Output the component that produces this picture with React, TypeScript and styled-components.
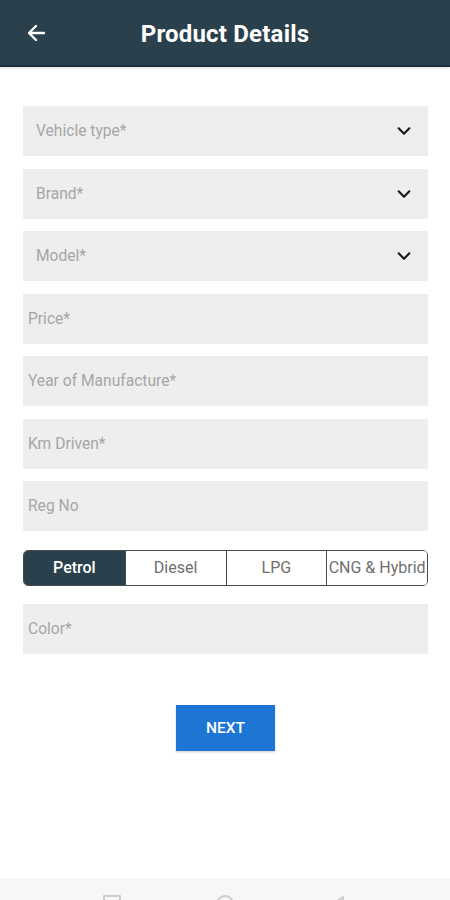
import React, { useState } from 'react';
import styled, { createGlobalStyle } from 'styled-components';

const GlobalStyle = createGlobalStyle`
  html, body {
    margin: 0;
    padding: 0;
    background: #ffffff;
    font-family: Roboto, "Liberation Sans", sans-serif;
  }
  * {
    box-sizing: border-box;
  }
`;

// Layout
const Screen = styled.div`
  width: 450px;
  height: 900px;
  display: flex;
  flex-direction: column;
  background: #ffffff;
  overflow: hidden;
`;

const Header = styled.header`
  height: 67px;
  flex-shrink: 0;
  background: #2b404d;
  border-bottom: 2px solid #1c2e3a;
  display: grid;
  grid-template-columns: 72px 1fr 72px;
  align-items: center;
  box-shadow: 0 1px 3px rgba(0, 0, 0, 0.15);
`;

const BackButton = styled.button`
  background: none;
  border: none;
  padding: 0 0 0 24px;
  height: 100%;
  display: flex;
  align-items: center;
  cursor: pointer;
`;

const Title = styled.h1`
  margin: 2px 0 0;
  text-align: center;
  color: #ffffff;
  font-size: 24px;
  font-weight: 700;
  letter-spacing: 0.2px;
`;

const Form = styled.form`
  flex: 1;
  display: flex;
  flex-direction: column;
  gap: 12.5px;
  padding: 39px 22px 0 23px;
`;

const Field = styled.div<{ $select?: boolean }>`
  height: 50px;
  flex-shrink: 0;
  background: #eeeeee;
  display: flex;
  align-items: center;
  justify-content: space-between;
  padding: ${({ $select }) => ($select ? '0 16px 0 13px' : '0 8px 0 5px')};
  font-size: 15.6px;
  color: #a6a6a6;
`;

const Segments = styled.div`
  height: 36px;
  flex-shrink: 0;
  display: grid;
  grid-template-columns: repeat(4, 1fr);
  border: 1px solid #4a4a4a;
  border-radius: 5px;
  overflow: hidden;
  margin: 6px 0 6px;
`;

const Segment = styled.button<{ $active: boolean }>`
  border: none;
  border-left: 1px solid #4a4a4a;
  background: ${({ $active }) => ($active ? '#2b404d' : '#ffffff')};
  color: ${({ $active }) => ($active ? '#ffffff' : '#6f6f6f')};
  font-family: inherit;
  font-size: 16px;
  font-weight: ${({ $active }) => ($active ? 500 : 400)};
  padding: 0;
  white-space: nowrap;
  cursor: pointer;

  &:first-child {
    border-left: none;
  }
`;

const Actions = styled.div`
  display: flex;
  justify-content: center;
  padding-top: 38px;
`;

const NextButton = styled.button`
  width: 99px;
  height: 46px;
  background: #1d76d4;
  border: none;
  color: #ffffff;
  font-family: inherit;
  font-size: 15.5px;
  font-weight: 500;
  box-shadow: 0 1px 2px rgba(0, 0, 0, 0.2);
  cursor: pointer;
`;

const NavBar = styled.nav`
  height: 22px;
  flex-shrink: 0;
  background: #f7f7f7;
  display: flex;
  justify-content: center;
  align-items: flex-start;
  gap: 95px;
  padding: 17px 0 0 0;
`;

const NavIcon = styled.div<{ $shape: 'square' | 'circle' }>`
  width: 18px;
  height: 18px;
  border: 2px solid #cdcdcd;
  border-radius: ${({ $shape }) => ($shape === 'circle' ? '50%' : '1px')};
`;

const BackTriangle = () => (
  <svg width="18" height="18" viewBox="0 0 18 18" fill="none">
    <path d="M14 2L4 9l10 7z" stroke="#cdcdcd" strokeWidth="2" strokeLinejoin="round" />
  </svg>
);

const Chevron = () => (
  <svg width="16" height="16" viewBox="0 0 24 24" fill="none">
    <path d="M4 8l8 8 8-8" stroke="#1a1a1a" strokeWidth="3.2" strokeLinecap="round" strokeLinejoin="round" />
  </svg>
);

const BackArrow = () => (
  <svg width="24" height="24" viewBox="0 0 24 24" fill="none">
    <path d="M20 12H5M12 5l-7 7 7 7" stroke="#ffffff" strokeWidth="2.4" strokeLinecap="round" strokeLinejoin="round" />
  </svg>
);

const selects = ['Vehicle type*', 'Brand*', 'Model*'];
const inputs = ['Price*', 'Year of Manufacture*', 'Km Driven*', 'Reg No'];
const fuels = ['Petrol', 'Diesel', 'LPG', 'CNG & Hybrid'];

export default function App() {
  const [fuel, setFuel] = useState('Petrol');

  return (
    <Screen>
      <GlobalStyle />
      <Header>
        <BackButton aria-label="Back">
          <BackArrow />
        </BackButton>
        <Title>Product Details</Title>
        <span />
      </Header>
      <Form onSubmit={(e) => e.preventDefault()}>
        {selects.map((label) => (
          <Field key={label} $select>
            <span>{label}</span>
            <Chevron />
          </Field>
        ))}
        {inputs.map((label) => (
          <Field key={label}>
            <span>{label}</span>
          </Field>
        ))}
        <Segments>
          {fuels.map((f) => (
            <Segment type="button" key={f} $active={fuel === f} onClick={() => setFuel(f)}>
              {f}
            </Segment>
          ))}
        </Segments>
        <Field>
          <span>Color*</span>
        </Field>
        <Actions>
          <NextButton type="submit">NEXT</NextButton>
        </Actions>
      </Form>
      <NavBar>
        <NavIcon $shape="square" />
        <NavIcon $shape="circle" />
        <BackTriangle />
      </NavBar>
    </Screen>
  );
}
